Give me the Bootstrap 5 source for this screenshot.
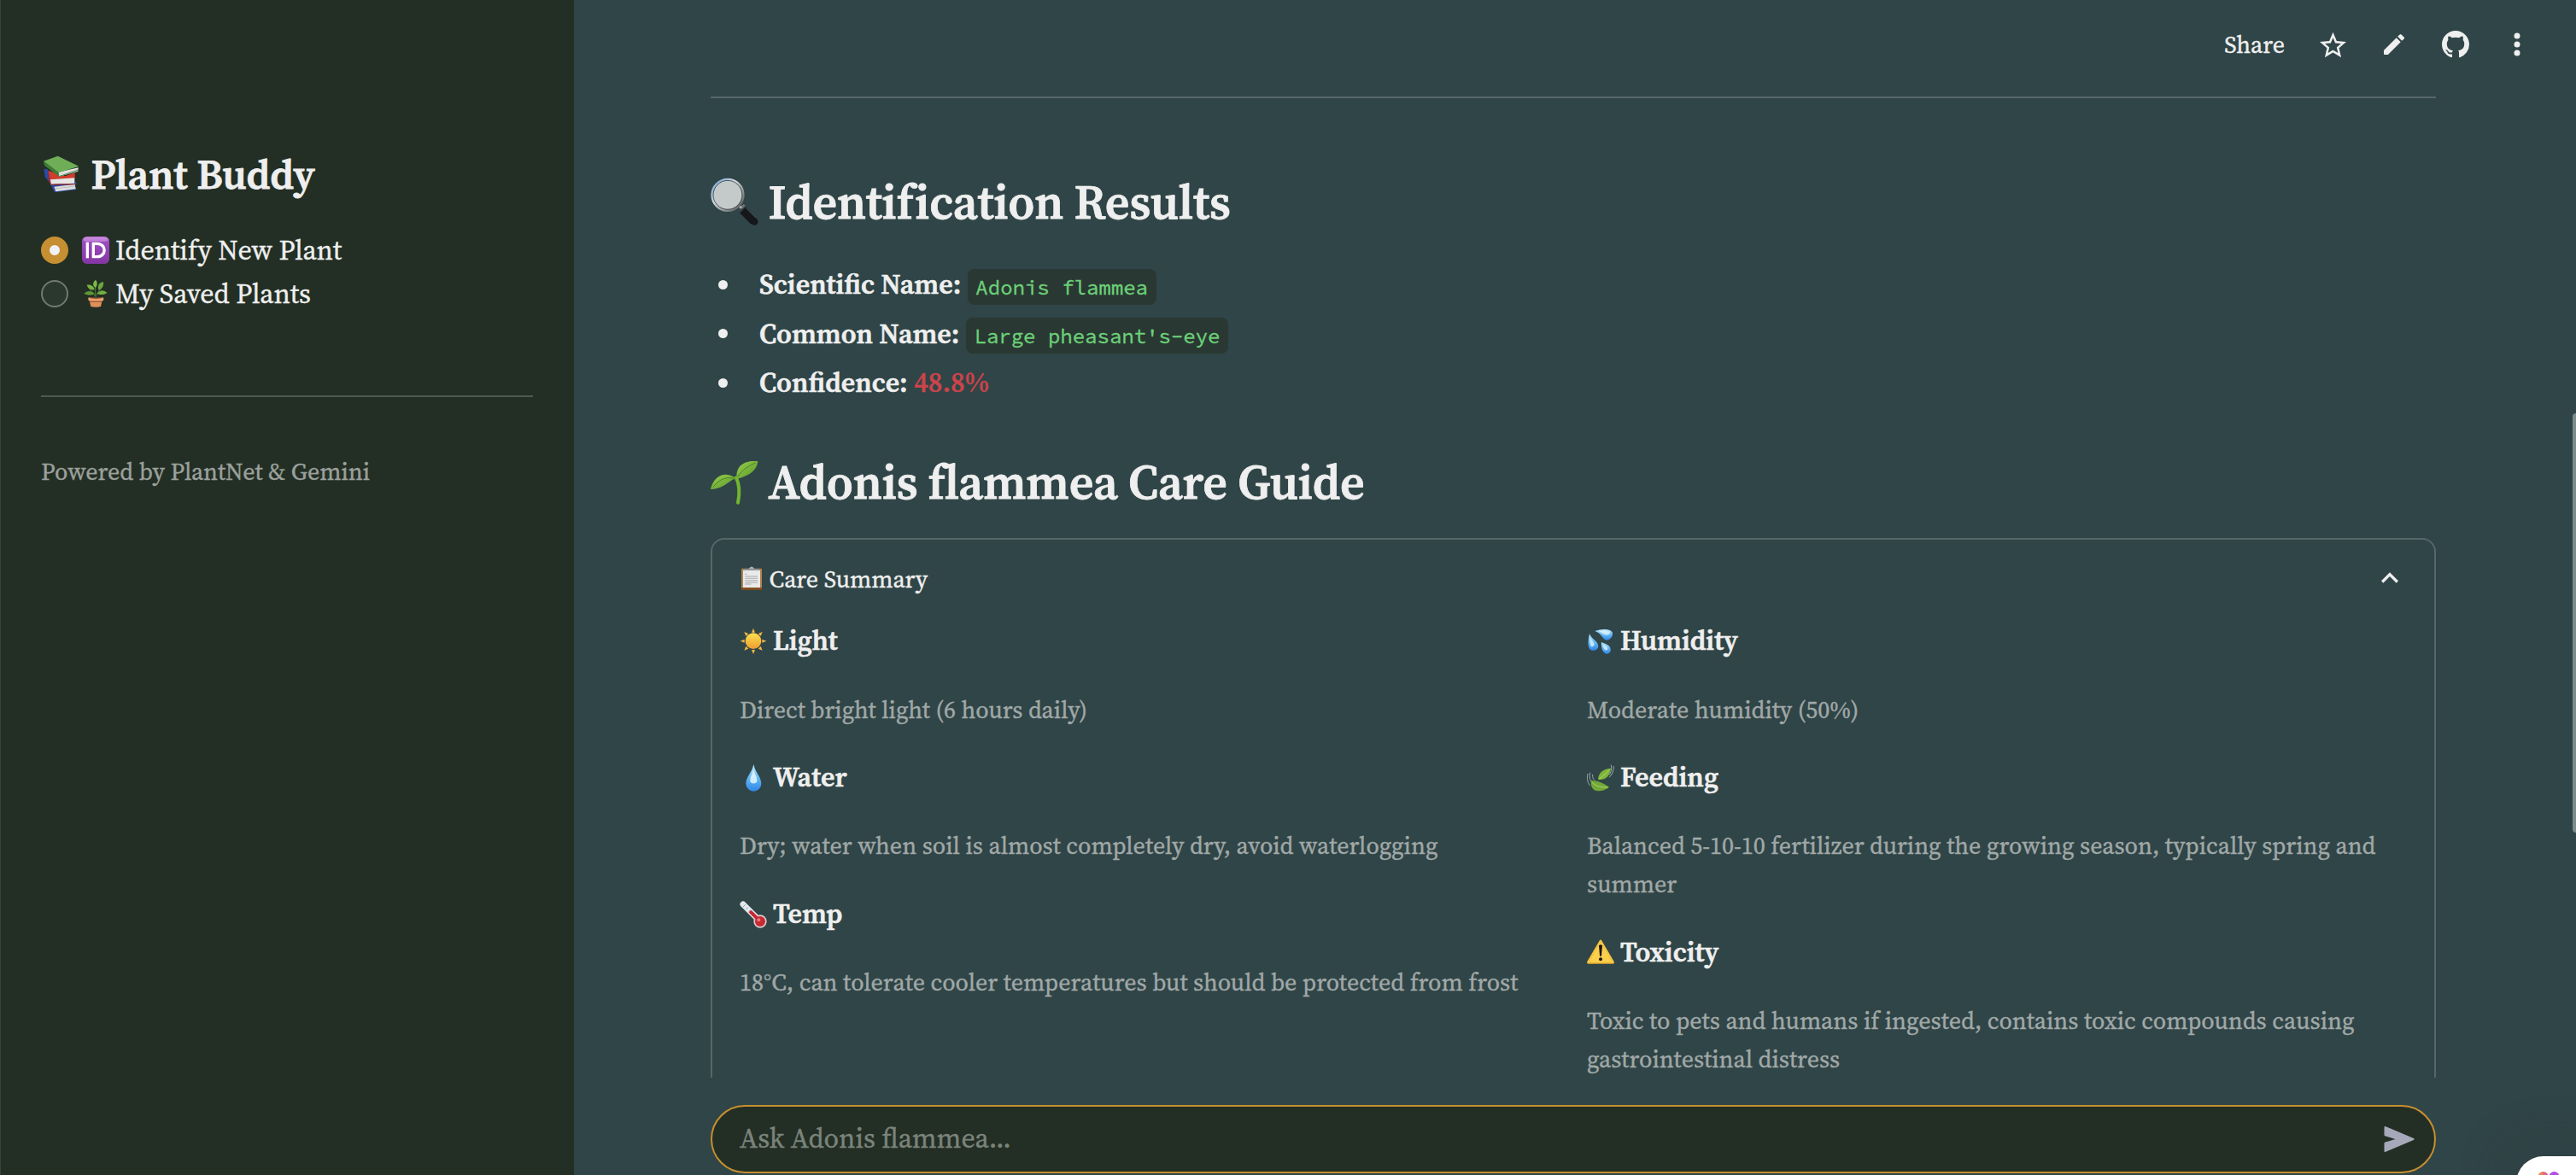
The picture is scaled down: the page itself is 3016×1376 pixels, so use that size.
<!DOCTYPE html>
<html lang="en">
<head>
<meta charset="utf-8">
<meta name="viewport" content="width=device-width, initial-scale=1">
<title>Plant Buddy</title>
<link href="https://cdn.jsdelivr.net/npm/bootstrap@5.3.0/dist/css/bootstrap.min.css" rel="stylesheet">
<style>
:root{--ink:#efefef;--dim:#a0a8a7;--forest:#232f24;--slate:#304547;--amber:#c68f31;--line:#56676a}
body{font-family:"Source Serif 4","Source Serif Pro","Noto Serif CJK SC","Liberation Serif",serif;font-size:32px;line-height:1.6;color:var(--ink);background:var(--slate);height:1376px;overflow:hidden;-webkit-text-stroke:.35px currentColor}
svg{display:block;flex:none;overflow:visible}
.side-panel{width:672px;padding:176px 48px 0;background:var(--forest);border-left:1px solid #36453c;padding-left:47px}
.app-title{font-size:48px;font-weight:600;line-height:57.6px;-webkit-text-stroke-width:.8px}
.slot-title{width:58.5px}
.nav-choices{margin-top:34px}
.nav-choice{height:51.2px}
.dot-radio{width:32px;height:32px;border:2px solid #717a72;background:#2b382d;margin:0 16px 0 0}
.dot-radio.is-on{border:10px solid var(--amber);background:#f1f2f6}
.slot-item{width:39px}
.rule{height:2px;background:var(--line)}
.side-panel .rule{background:#4d594e;margin-top:93px}
.caption-text{font-size:28px;line-height:44.8px;color:var(--dim)}
.side-panel .caption-text{margin-top:65px;color:#9ba09c}
.top-bar{height:104px;padding-right:59px;font-size:28px}
.top-bar .act{width:72px;height:48px}
.page-col{width:2020px;margin-left:160px}
.big-head{font-size:56px;font-weight:600;line-height:67.2px;letter-spacing:-.25px;-webkit-text-stroke-width:.8px}
.slot-big{width:67.5px}
.facts li{margin-bottom:6.4px;height:51.2px;white-space:nowrap}
.facts li::before{content:"";display:inline-block;width:11px;height:11px;border-radius:50%;background:var(--ink);margin:0 37.5px 0 8.5px;vertical-align:5.5px}
.facts code{font-family:"Source Code Pro","DejaVu Sans Mono",monospace;font-size:24px;color:#6cd178;background:#2a3833;border-radius:8px;padding:5.5px 9.6px}
.facts b{font-weight:600;-webkit-text-stroke-width:.6px}
.alert-num{color:#cb444b;font-weight:600}
.guide-box{border:2px solid var(--line);border-radius:16px;height:760px;padding:24px 32px;margin-top:32px}
.guide-head{font-size:28px;line-height:44.8px;height:44.8px}
.slot-sum{width:34.5px}
.slot-sub{width:39px}
.sub-head{font-size:32px;font-weight:600;line-height:51.2px;height:51.2px;-webkit-text-stroke-width:.6px}
.tips{gap:32px;margin-top:24.6px}
.tips>div{width:960px}
.tips .caption-text{margin:32.2px 0 31.8px}
.ask-bar{height:80px;border:2px solid var(--amber);border-radius:40px;background:var(--forest);color:#7b837c;padding:0 23px 0 32px;margin-bottom:2px}
.thumb{right:0;top:484px;width:4px;height:491px;background:#7e8b8b;border-radius:4px 0 0 4px}
.widget{left:2946px;top:1354px;width:80px;height:60px;background:#fff;border-radius:32px 0 0 0;box-shadow:0 0 60px rgba(45,55,65,.5)}
</style>
<script src="https://cdn.jsdelivr.net/npm/bootstrap@5.3.0/dist/js/bootstrap.bundle.min.js"></script>
</head>
<body class="d-flex position-relative m-0">

<aside class="side-panel flex-shrink-0 h-100">
  <h1 class="app-title d-flex align-items-center m-0">
    <span class="slot-title"><svg width="48" height="48" viewBox="12 20 144 144">
      <path d="M22 72 L34 70 L60 128 L134 116 L138 123 L130 128 L137 143 L60 153 L42 118 L26 98 Z" fill="#2b49a5"/>
      <path d="M58 133 L131 124 L134 141 L64 150 Z" fill="#dedede"/><path d="M60 140 L132 131" stroke="#aaa" stroke-width="2"/>
      <path d="M38 76 L96 96 L131 84 L131 103 L40 108 Z" fill="#d23b2d"/>
      <path d="M42 108 L130 102 L130 121 L46 124 Z" fill="#e6e6e6"/><path d="M44 124 L132 122 L130 126 L48 127 Z" fill="#a92a20"/>
      <path d="M38 76 L48 124 L40 116 Z" fill="#a92a20"/>
      <path d="M72 82 L143 66 L142 79 L76 97 Z" fill="#ececec"/><path d="M74 90 L142 72" stroke="#b5b5b5" stroke-width="2"/>
      <path d="M21 43 L71 25 L145 61 L74 84 Z" fill="#6eae57"/><path d="M21 43 L74 84 L76 98 L24 58 Z" fill="#3f7d35"/><path d="M143 76 L76 98 L76 95 L143 73Z" fill="#3f7d35"/>
    </svg></span>Plant Buddy</h1>
  <div class="nav-choices">
    <div class="nav-choice d-flex align-items-center">
      <span class="dot-radio is-on rounded-circle"></span>
      <span class="slot-item"><svg width="32" height="32" viewBox="0 0 96 96">
        <defs><linearGradient id="vio" x2="0" y2="1"><stop offset="0" stop-color="#bf78d6"/><stop offset=".2" stop-color="#9c4bc0"/><stop offset="1" stop-color="#8236a2"/></linearGradient></defs>
        <rect width="96" height="96" rx="17" fill="url(#vio)"/><rect x="5" y="3" width="86" height="14" rx="9" fill="#d8a4e8" opacity=".5"/>
        <path d="M19 20V76" stroke="#fff" stroke-width="10"/><path d="M40 25H53C87 25 87 71 53 71H40Z" fill="none" stroke="#fff" stroke-width="10"/>
      </svg></span>Identify New Plant
    </div>
    <div class="nav-choice d-flex align-items-center">
      <span class="dot-radio rounded-circle"></span>
      <span class="slot-item"><svg width="32" height="32" viewBox="156 465 96 96">
        <path d="M204 524 C203 510 202 500 203 486 M204 520 C212 510 218 500 224 492 M203 522 C196 510 190 502 182 498" stroke="#4f8136" stroke-width="3" fill="none"/>
        <path d="M204 464 C192 474 193 486 204 492 C211 482 211 472 204 464Z" fill="#7eb84a"/>
        <path d="M231 471 C214 474 210 486 214 500 C228 496 233 484 231 471Z" fill="#6ba63d"/>
        <path d="M173 482 C177 496 188 502 200 498 C198 486 186 480 173 482Z" fill="#77b244"/>
        <path d="M163 513 C174 500 188 502 200 513 C188 520 174 518 163 513Z" fill="#5f9836"/>
        <path d="M244 510 C232 497 218 500 209 512 C220 519 234 517 244 510Z" fill="#73ad41"/>
        <path d="M181 532 H228 L222 558 Q205 563 187 558Z" fill="#e08f59"/><path d="M183 538H226L225 543H184Z" fill="#a96238"/><rect x="178" y="525" width="54" height="13" rx="5" fill="#eba26e"/><ellipse cx="205" cy="527" rx="23" ry="3" fill="#6a412a"/>
      </svg></span>My Saved Plants
    </div>
  </div>
  <div class="rule"></div>
  <p class="caption-text mb-0">Powered by PlantNet &amp; Gemini</p>
</aside>

<main class="d-flex flex-column flex-grow-1 h-100">
  <header class="top-bar d-flex align-items-center justify-content-end flex-shrink-0">
    <span class="me-3 pe-1">Share</span>
    <span class="act d-flex align-items-center justify-content-center"><svg width="31" height="31" viewBox="2 2 20 19" fill="#efefef"><path d="M22 9.24l-7.19-.62L12 2 9.19 8.63 2 9.24l5.46 4.73L5.82 21 12 17.27 18.18 21l-1.63-7.03L22 9.24zM12 15.4l-3.76 2.27 1-4.28-3.32-2.88 4.38-.38L12 6.1l1.71 4.04 4.38.38-3.32 2.88 1 4.28L12 15.4z"/></svg></span>
    <span class="act d-flex align-items-center justify-content-center"><svg width="24" height="24" viewBox="3 3 18 18" fill="#efefef"><path d="M3 17.46v3.04c0 .28.22.5.5.5h3.04c.13 0 .26-.05.35-.15L17.81 9.94l-3.75-3.75L3.15 17.1c-.1.1-.15.22-.15.36zM20.71 7.04a1 1 0 0 0 0-1.41l-2.34-2.34a1 1 0 0 0-1.41 0l-1.83 1.83 3.75 3.75 1.83-1.83z"/></svg></span>
    <span class="act d-flex align-items-center justify-content-center"><svg width="32" height="32" viewBox="0 0 16 16" fill="#efefef"><path d="M8 0C3.58 0 0 3.58 0 8c0 3.54 2.29 6.53 5.47 7.59.4.07.55-.17.55-.38 0-.19-.01-.82-.01-1.49-2.01.37-2.53-.49-2.69-.94-.09-.23-.48-.94-.82-1.13-.28-.15-.68-.52-.01-.53.63-.01 1.08.58 1.23.82.72 1.21 1.87.87 2.33.66.07-.52.28-.87.51-1.07-1.78-.2-3.64-.89-3.64-3.95 0-.87.31-1.59.82-2.15-.08-.2-.36-1.02.08-2.12 0 0 .67-.21 2.2.82.64-.18 1.32-.27 2-.27s1.36.09 2 .27c1.53-1.04 2.2-.82 2.2-.82.44 1.1.16 1.92.08 2.12.51.56.82 1.27.82 2.15 0 3.07-1.87 3.75-3.65 3.95.29.25.54.73.54 1.48 0 1.07-.01 1.93-.01 2.2 0 .21.15.46.55.38A8.01 8.01 0 0 0 16 8c0-4.42-3.58-8-8-8z"/></svg></span>
    <span class="act d-flex align-items-center justify-content-center" style="margin-right:-26px"><svg width="8" height="28" viewBox="0 0 8 28" fill="#efefef"><circle cx="4" cy="4" r="3.5"/><circle cx="4" cy="14" r="3.5"/><circle cx="4" cy="24" r="3.5"/></svg></span>
  </header>

  <div class="page-col flex-grow-1 overflow-hidden">
    <div class="rule" style="margin-top:9px"></div>
    <h2 class="big-head d-flex align-items-center mb-0" style="margin-top:88px">
      <span class="slot-big"><svg width="56" height="56" viewBox="18 34 168 168">
        <defs><linearGradient id="rim" x2="1" y2="1"><stop offset="0" stop-color="#6f9fd8"/><stop offset=".4" stop-color="#d5d9dc"/><stop offset="1" stop-color="#4c4c4c"/></linearGradient></defs>
        <path d="M124 138 L137 127" stroke="#777" stroke-width="8"/><path d="M112 124L126 138" stroke="#aaa" stroke-width="9"/>
        <path d="M131 145 L170 184" stroke="#15171a" stroke-width="29" stroke-linecap="butt"/><path d="M165 179L172 186" stroke="#15171a" stroke-width="25" stroke-linecap="round"/><path d="M142 138L178 173" stroke="#55585c" stroke-width="3"/>
        <circle cx="78" cy="92" r="54" fill="#c3cac9" stroke="url(#rim)" stroke-width="10"/><circle cx="78" cy="92" r="51" fill="none" stroke="#4a555b" stroke-width="3"/>
      </svg></span>Identification Results</h2>
    <ul class="facts list-unstyled mb-0" style="margin-top:38px">
      <li><b>Scientific Name:</b> <code>Adonis flammea</code></li>
      <li><b>Common Name:</b> <code>Large pheasant's-eye</code></li>
      <li><b>Confidence:</b> <span class="alert-num">48.8%</span></li>
    </ul>
    <h2 class="big-head d-flex align-items-center mb-0" style="margin-top:56px">
      <span class="slot-big"><svg width="56" height="56" viewBox="18 20 168 168">
        <defs><linearGradient id="lf" x2="1" y2="1"><stop offset="0" stop-color="#9bcf4d"/><stop offset="1" stop-color="#55962b"/></linearGradient></defs>
        <path d="M108 90 C122 120 120 148 114 178" stroke="#72b52f" stroke-width="12" fill="none" stroke-linecap="round"/>
        <path d="M110 94 C104 54 132 26 184 33 C181 62 158 84 110 94Z" fill="url(#lf)"/><path d="M18 131 C28 84 68 62 110 94 C84 92 74 128 18 131Z" fill="url(#lf)"/>
        <path d="M112 88C132 60 150 50 176 38M26 124C48 96 72 86 102 93" stroke="#3f7a24" stroke-width="2.5" fill="none"/>
      </svg></span>Adonis flammea Care Guide</h2>

    <section class="guide-box">
      <div class="guide-head d-flex align-items-center">
        <span class="slot-sum"><svg width="28" height="28" viewBox="120 401 84 84">
          <rect x="126" y="406" width="72" height="76" rx="3" fill="#b0824e"/><path d="M126 474H198V482H126Z" fill="#7c4a1f"/><path d="M132 413H192V473H132Z" fill="#e9e9ea"/><path d="M138 426H146M139 434H183M139 441H183M139 448H183M139 455H183M139 461H160" stroke="#bdbdc0" stroke-width="4"/><path d="M136 407H188V413H136Z" fill="#8d949b"/><path d="M152 407Q162 392 172 407Z" fill="#aab0b8"/>
        </svg></span>Care Summary
        <svg class="ms-auto" width="40" height="40" viewBox="0 0 24 24" fill="#efefef"><path d="M12 7.4l-6 6 1.41 1.41L12 10.23l4.59 4.58L18 13.4z"/></svg>
      </div>
      <div class="tips d-flex">
        <div>
          <h3 class="sub-head d-flex align-items-center m-0"><span class="slot-sub"><svg width="32" height="32" viewBox="120 611 96 96">
            <defs><linearGradient id="sun" x2="0" y2="1"><stop offset="0" stop-color="#fbe14f"/><stop offset="1" stop-color="#ee9b2f"/></linearGradient></defs>
            <path d="M168 613L174 628H162ZM168 704L174 689H162ZM122 658L137 652V664ZM214 658L199 652V664ZM136 626L151 632L142 641ZM200 626L194 641L185 632ZM136 691L142 676L151 685ZM200 691L185 685L194 676Z" fill="#f1b545"/><circle cx="168" cy="658" r="28" fill="url(#sun)"/>
          </svg></span>Light</h3>
          <p class="caption-text">Direct bright light (6 hours daily)</p>
          <h3 class="sub-head d-flex align-items-center m-0"><span class="slot-sub"><svg width="32" height="32" viewBox="0 0 96 96">
            <defs><linearGradient id="dr" x2="0" y2="1"><stop offset="0" stop-color="#bfe7fd"/><stop offset=".5" stop-color="#64b9f5"/><stop offset="1" stop-color="#2f86e6"/></linearGradient></defs>
            <path d="M49 0C54 28 76 45 76 68A27 27 0 0 1 22 68C22 45 44 28 49 0Z" fill="url(#dr)"/><path d="M48 16C53 38 62 44 61 60C60 70 38 70 37 60C36 44 45 38 48 16Z" fill="#eefaff" opacity=".8"/>
          </svg></span>Water</h3>
          <p class="caption-text">Dry; water when soil is almost completely dry, avoid waterlogging</p>
          <h3 class="sub-head d-flex align-items-center m-0"><span class="slot-sub"><svg width="32" height="32" viewBox="0 0 96 96">
            <path d="M12 12L64 64" stroke="#e4e8ec" stroke-width="21" stroke-linecap="round"/><circle cx="72" cy="72" r="23" fill="#d9c9cf"/><path d="M39 39L70 70" stroke="#c72832" stroke-width="12" stroke-linecap="round"/><circle cx="72" cy="72" r="18" fill="#c62a32"/><circle cx="67" cy="67" r="6" fill="#ef7a7e"/><path d="M12 21L20 13M22 30L29 23M31 40L39 32" stroke="#8c9da6" stroke-width="3"/>
          </svg></span>Temp</h3>
          <p class="caption-text">18°C, can tolerate cooler temperatures but should be protected from frost</p>
        </div>
        <div>
          <h3 class="sub-head d-flex align-items-center m-0"><span class="slot-sub"><svg width="32" height="32" viewBox="27 42 96 96">
            <path d="M55 54C80 44 112 46 117 60C119 76 102 92 90 84C80 76 74 60 55 54Z" fill="url(#dr)"/><path d="M36 64C30 88 30 106 36 117C46 128 68 122 67 106C64 88 46 86 36 64Z" fill="url(#dr)"/><path d="M78 93C76 112 82 132 96 134C112 134 114 116 104 106C96 98 86 98 78 93Z" fill="url(#dr)"/><path d="M68 54C86 50 104 52 108 59C106 68 96 70 88 66ZM39 78C36 96 38 104 44 110C52 108 56 102 50 94ZM84 102C84 112 88 122 96 122C102 118 100 112 96 108Z" fill="#e6f6ff" opacity=".75"/>
          </svg></span>Humidity</h3>
          <p class="caption-text">Moderate humidity (50%)</p>
          <h3 class="sub-head d-flex align-items-center m-0"><span class="slot-sub"><svg width="32" height="32" viewBox="24 520 96 96">
            <path d="M63 574C64 550 80 536 108 534C104 562 90 576 63 574Z" fill="#7db53b"/><path d="M38 577C58 576 84 586 102 601C84 615 60 617 48 609C38 600 38 590 38 577Z" fill="#71a836"/><path d="M67 571C82 562 92 550 104 538M42 584C56 598 76 602 97 601" stroke="#b8da77" stroke-width="2.5" fill="none"/><path d="M27 553C22 572 28 588 36 596M35 549C31 564 34 574 40 582M44 556C43 566 46 572 50 576M109 522C112 538 108 550 103 558M118 526C118 544 112 558 102 566" stroke="#9aa8a6" stroke-width="3" fill="none"/>
          </svg></span>Feeding</h3>
          <p class="caption-text">Balanced 5-10-10 fertilizer during the growing season, typically spring and summer</p>
          <h3 class="sub-head d-flex align-items-center m-0"><span class="slot-sub"><svg width="32" height="32" viewBox="24 1131 96 96">
            <path d="M72 1139L116 1214Q117 1217 113 1217H31Q27 1217 28 1214Z" fill="#fcd04b" stroke="#f5c443" stroke-width="7" stroke-linejoin="round"/><path d="M27 1219H117" stroke="#b98c31" stroke-width="3"/><path d="M66 1156Q72 1150 78 1156L75 1192Q72 1196 69 1192Z" fill="#1c1811"/><circle cx="72" cy="1204" r="6" fill="#1c1811"/>
          </svg></span>Toxicity</h3>
          <p class="caption-text">Toxic to pets and humans if ingested, contains toxic compounds causing gastrointestinal distress</p>
        </div>
      </div>
    </section>
  </div>

  <div class="page-col flex-shrink-0" style="padding-top:32px">
    <div class="ask-bar d-flex align-items-center justify-content-between">
      <span>Ask Adonis flammea...</span>
      <svg width="36" height="30" viewBox="276 204 105 90"><path d="M279 207L378 249L279 291V263L325 249L279 235Z" fill="#a6a9b9" stroke="#a6a9b9" stroke-width="6" stroke-linejoin="round"/></svg>
    </div>
  </div>
</main>

<div class="thumb position-absolute"></div>
<div class="widget position-absolute"><svg width="80" height="60" viewBox="0 0 80 60">
  <defs><linearGradient id="pk"><stop offset="0" stop-color="#eda03c"/><stop offset="1" stop-color="#e0489f"/></linearGradient></defs>
  <circle cx="31.5" cy="24" r="6" fill="url(#pk)"/><circle cx="44.5" cy="24" r="6" fill="#b14fe0"/>
</svg></div>
</body>
</html>
